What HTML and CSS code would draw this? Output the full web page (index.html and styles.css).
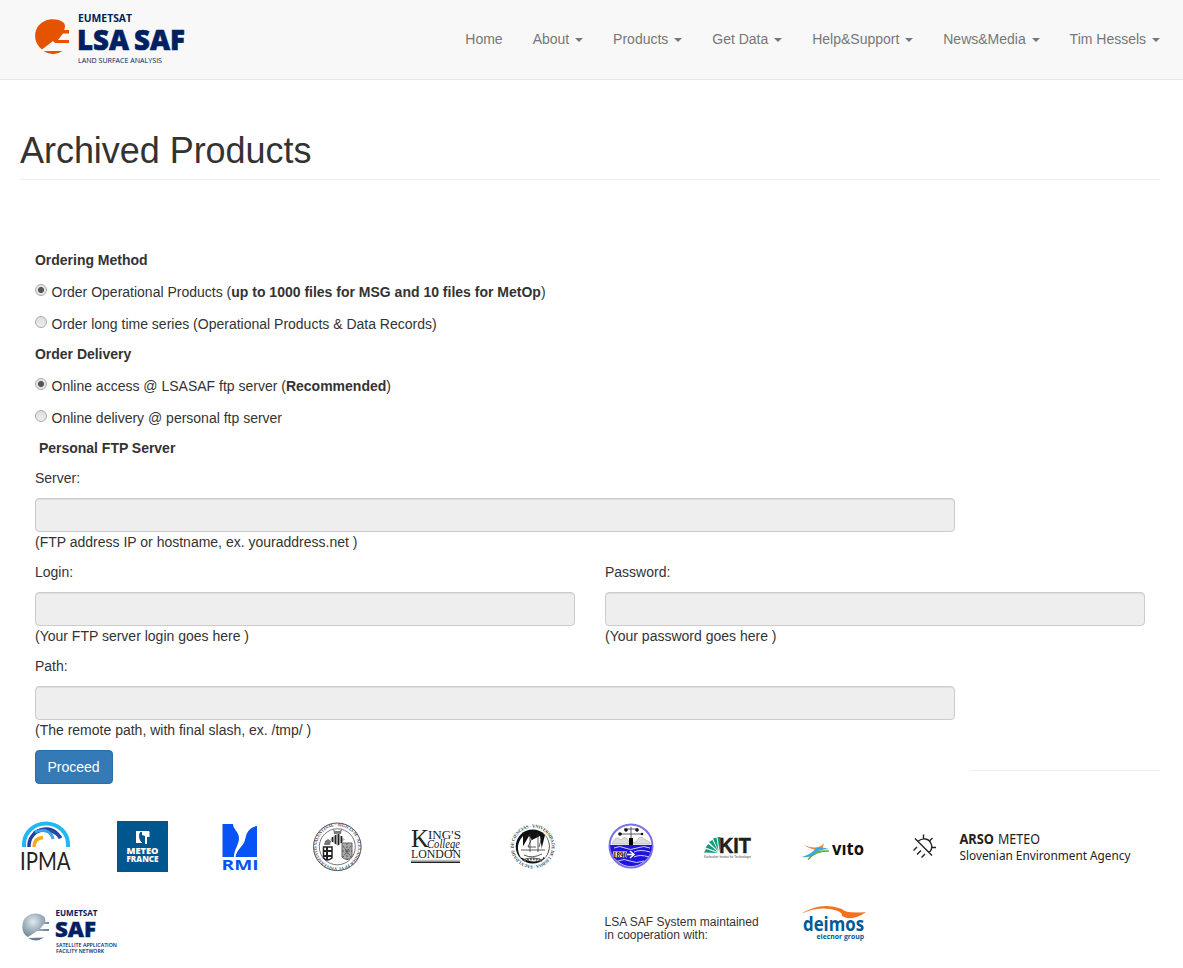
FILE: index.html
```html
<!DOCTYPE html>
<html lang="en">
<head>
<meta charset="utf-8">
<title>LSA SAF - Archived Products</title>
<link rel="stylesheet" href="styles.css">
</head>
<body>
<header class="navbar">
  <a class="brand">
    <svg width="160" height="60" viewBox="30 8 160 60">
      <path fill="#e65300" d="M62 21.500C54 17 43 19 37.500 27C33 35 35 44 42 49.500L53 41L55 43H69V40H58L63 33.500H69V30H64C66 27 65 23 62 21.500ZM43.500 51Q53 57.500 62.500 51Z"/>
      <g class="logo-face" fill="#00205f">
        <text x="78" y="22.200" font-size="11" font-weight="700" textLength="54" lengthAdjust="spacingAndGlyphs">EUMETSAT</text>
        <g stroke="#00205f" stroke-width=".6">
          <text x="77" y="50.300" font-size="28.500" font-weight="800" textLength="52" lengthAdjust="spacingAndGlyphs">LSA</text>
          <text x="134" y="50.300" font-size="28.500" font-weight="800" textLength="51" lengthAdjust="spacingAndGlyphs">SAF</text>
        </g>
        <text x="78" y="63.200" font-size="8" textLength="84" lengthAdjust="spacingAndGlyphs">LAND SURFACE ANALYSIS</text>
      </g>
    </svg>
  </a>
  <nav class="menu">
    <a>Home</a>
    <a>About <i class="caret"></i></a>
    <a>Products <i class="caret"></i></a>
    <a>Get Data <i class="caret"></i></a>
    <a>Help&amp;Support <i class="caret"></i></a>
    <a>News&amp;Media <i class="caret"></i></a>
    <a>Tim Hessels <i class="caret"></i></a>
  </nav>
</header>
<main class="page">
  <h1 class="title">Archived Products</h1>
  <div class="content">
    <form class="order">
      <div class="group">
        <b>Ordering Method</b>
        <label class="option"><span class="radio on"></span><span>Order Operational Products (<b>up to 1000 files for MSG and 10 files for MetOp</b>)</span></label>
        <label class="option"><span class="radio"></span><span>Order long time series (Operational Products &amp; Data Records)</span></label>
      </div>
      <div class="group">
        <b>Order Delivery</b>
        <label class="option"><span class="radio on"></span><span>Online access @ LSASAF ftp server (<b>Recommended</b>)</span></label>
        <label class="option"><span class="radio"></span><span>Online delivery @ personal ftp server</span></label>
      </div>
      <b class="indent">Personal FTP Server</b>
      <div class="field"><label>Server:</label><input class="control" disabled><span>(FTP address IP or hostname, ex. youraddress.net )</span></div>
      <div class="pair">
        <div class="field"><label>Login:</label><input class="control" disabled><span>(Your FTP server login goes here )</span></div>
        <div class="field"><label>Password:</label><input class="control" disabled><span>(Your password goes here )</span></div>
      </div>
      <div class="field"><label>Path:</label><input class="control" disabled><span>(The remote path, with final slash, ex. /tmp/ )</span></div>
      <button class="proceed" type="button">Proceed</button>
    </form>
    <hr class="rule">
  </div>
</main>
<footer class="partners">
  <div class="logos">
    <svg viewBox="20 810 95 70">
      <g fill="none">
        <path d="M24 847V844A22 20.500 0 0 1 68 844V847" stroke="#20b8ef" stroke-width="4"/>
        <path d="M29 847C28 829 53 822 60 838" stroke="#203f99" stroke-width="3.500"/>
        <path d="M34 833C46 825 58 834 61 838" stroke="#244aa5" stroke-width="3"/>
        <path d="M35 832C46 828 52 833 53 839" stroke="#38a3e5" stroke-width="3"/>
        <path d="M34 847Q34 838 43 837.500" stroke="#f9a91c" stroke-width="3.500"/>
      </g>
      <text class="thin" x="20" y="870" font-size="25" fill="#222" textLength="50.500" lengthAdjust="spacingAndGlyphs">IPMA</text>
    </svg>
    <svg viewBox="115 810 95 70">
      <path fill="#00578f" d="M117 821h51v51h-51z"/>
      <path fill="#fff" d="M136 831h5q-4 5 0 11v1h-5zM142 831h7v6h-2v7h-2v-8l-3-1z"/>
      <path d="M136 831.500H149V837M136 842.500H142" stroke="#fff" fill="none"/>
      <g class="logo-face" fill="#fff" font-size="8.200" font-weight="800">
        <text x="126.500" y="853.500" textLength="32" lengthAdjust="spacingAndGlyphs">METEO</text>
        <text x="126.500" y="862" textLength="32" lengthAdjust="spacingAndGlyphs">FRANCE</text>
      </g>
    </svg>
    <svg viewBox="210 810 95 70">
      <path fill="#0753f5" d="M222.500 824H233C233 829 239 832 239 838C239 845 234 849 234 857H222.500ZM257 826V857H235.500C237 848 244 847 245.500 838C247 830 252 827 257 826Z"/>
      <text class="logo-face" x="221.500" y="869.500" fill="#0753f5" font-size="14" font-weight="700" textLength="37" lengthAdjust="spacingAndGlyphs">RMI</text>
    </svg>
    <svg viewBox="305 810 95 70">
      <g fill="none" stroke="#555"><circle cx="337.300" cy="846.800" r="23.800"/><circle cx="337.300" cy="846.800" r="18" stroke-width=".8"/></g>
      <path id="uvRing" fill="none" d="M337.300 867.500A20.700 20.700 0 1 1 337.400 867.500"/>
      <text class="serif" font-size="4.500" font-weight="700" fill="#555"><textPath href="#uvRing" textLength="128">VNIVERSITATIS VALENTINAE · SIGILLVM · ALEXANDER PP VI</textPath></text>
      <path d="M333 828L335 831H340L342 828L341 834H334Z" fill="#777"/>
      <path d="M337.500 833L345 839.500L337.500 846L330 839.500Z" fill="#bbb"/>
      <path d="M332.500 837V842M335.500 835V844M338.500 834V845M341.500 836V843" stroke="#222" stroke-width="1.500"/>
      <path d="M323.500 847H332V858Q327 862 323.500 858Z" fill="#fff" stroke="#222" stroke-width="1.500"/>
      <path d="M323 851H332M323 856H332M327 847V860" stroke="#222" stroke-width="2"/>
      <path d="M324 845L325 841L328 839L331 841L330 845Z" fill="#777"/>
      <path d="M342 843H352V857Q347 862 342 857Z" fill="#aaa" stroke="#666"/>
      <path d="M343 846L351 857M351 846L343 857M347 843V860M342 851H352" stroke="#555" stroke-dasharray="2 1"/>
    </svg>
    <svg viewBox="400 810 95 70">
      <g class="serif" fill="#222">
        <text x="411" y="847" font-size="26" textLength="18" lengthAdjust="spacingAndGlyphs">K</text>
        <text x="428" y="839" font-size="13.500" textLength="33" lengthAdjust="spacingAndGlyphs">ING'S</text>
        <text x="427" y="847.500" font-size="11.500" font-style="italic" textLength="33" lengthAdjust="spacingAndGlyphs">College</text>
        <text x="411" y="858" font-size="12.500" textLength="50" lengthAdjust="spacingAndGlyphs">LONDON</text>
      </g>
      <path d="M411 860.300H460" stroke="#aaa"/><path d="M411 862.300H460" stroke="#222" stroke-width="1.500"/>
    </svg>
    <svg viewBox="495 810 95 70">
      <path id="lisRing" fill="none" d="M532.700 865.500A19 19 0 1 1 532.800 865.500"/>
      <text class="serif" font-size="4.500" font-weight="700" fill="#444"><textPath href="#lisRing" textLength="118">FACVLDADE DE CIENCIAS · VNIVERSIDADE DE LISBOA ·</textPath></text>
      <circle cx="532.700" cy="846.500" r="17" fill="#111"/>
      <path d="M523 836Q514 846 521 858L527 855L523 847ZM545 835Q553 846 545 858L540 855Z" fill="#fff"/>
      <path d="M522 848L529 836L532 840L540 836L542 850H547L542 860Q531 864 521 857Z" fill="#fff"/>
      <path d="M530 834V852M538 834V852M521 850H545M524 855Q532 859 542 854M532 838L528 847H536M541 840L539 847M522 860Q532 856 543 860" stroke="#333" stroke-width=".8" fill="none"/>
      <path d="M524 861Q533 857 542 861" stroke="#666" stroke-width="2.500" stroke-dasharray="2 1" fill="none"/>
    </svg>
    <svg viewBox="590 810 95 70">
      <circle cx="631" cy="846" r="21.500" fill="#fff" stroke="#7770ed" stroke-width="2"/>
      <path d="M610 845H652A21 21 0 0 1 610 845Z" fill="#2014d8"/>
      <path d="M613 842Q616 835 621 840Q625 834 629 842H636Q640 834 644 839L650 842V844H612Z" fill="#ddd" stroke="#aaa" stroke-width=".6"/>
      <path d="M631 827V845M619 834H643M624 829H638" stroke="#333" stroke-width=".8"/>
      <path d="M629 838H633V845H629Z"/>
      <g fill="#111"><circle cx="620" cy="834" r="1.800"/><circle cx="642" cy="834" r="1.300"/><circle cx="626" cy="830" r="1.800"/><circle cx="637" cy="830" r="1.800"/></g>
      <g fill="none" stroke="#cfd0ff" stroke-width="1"><path d="M614 848Q620 845 625 848T637 848T650 848M634 852Q640 849 650 852M634 857Q640 854 649 857M618 861Q624 858 630 861T644 861"/></g>
      <path d="M613 851.500H627V857.500H614Z" fill="#fff"/>
      <text class="serif" x="613" y="857.500" font-size="8" font-weight="700" textLength="14" lengthAdjust="spacingAndGlyphs">1890</text>
      <path d="M627 854.500H633M630 851L634 854.500L630 858" stroke="#fff" stroke-width="1.500" fill="none"/>
    </svg>
    <svg viewBox="685 810 95 70">
      <path fill="#159b7a" d="M718 853L704 852.500L706 849ZM718 852L705.500 847.500L708.500 844ZM718 851L709 842L712.500 840ZM718.500 851L713 838.500L716.500 837.500ZM719.500 852L717.500 837H720.500Z"/>
      <text class="sans" fill="#202020" font-weight="700" font-size="22.500" x="719" y="853" textLength="32" lengthAdjust="spacingAndGlyphs" stroke="#202020" stroke-width=".5">KIT</text>
      <text class="sans" x="704" y="858" font-size="3.600" textLength="47" lengthAdjust="spacingAndGlyphs" fill="#444">Karlsruher Institut für Technologie</text>
    </svg>
    <svg viewBox="780 810 95 70">
      <path fill="#f08a32" d="M804 845Q818 851 824 843L822 850Q812 851 804 845Z"/>
      <path fill="#65ad38" d="M808 860Q812 849 829 851Q815 851 808 860Z" stroke="#65ad38"/>
      <path fill="#3fa5df" d="M802 857Q812 854 816 848Q820 846 829 849Q817 849 813 855Q808 858 802 857Z"/>
      <text class="logo-face" x="832" y="855" font-size="17.500" font-weight="700" fill="#111" textLength="32" lengthAdjust="spacingAndGlyphs">vıto</text>
    </svg>
    <svg class="wide" viewBox="875 810 285 70">
      <g fill="none" stroke="#222" stroke-width="1.400"><path d="M915 838.500L932 855.500M918 841.500C922 837.500 929 838 931 843.500C933 847 931 851 929 852.500M923.500 834.500V839M932.500 838L929.500 841M936 847.500H932M917 847L913.500 850.500M921 850.500L917 854.500M925 854L921.500 857.500"/></g>
      <g class="noto" fill="#222">
        <text x="959.500" y="844" font-size="13.500" font-weight="700" textLength="34.500" lengthAdjust="spacingAndGlyphs">ARSO</text>
        <text x="998" y="844" font-size="13.500" textLength="42" lengthAdjust="spacingAndGlyphs">METEO</text>
        <text x="959.500" y="859.500" font-size="12.500" textLength="171" lengthAdjust="spacingAndGlyphs">Slovenian Environment Agency</text>
      </g>
    </svg>
  </div>
  <div class="support">
    <svg class="saf" viewBox="20 895 110 70">
      <defs><radialGradient id="steel" cx=".4" cy=".3" r=".8"><stop stop-color="#e0e8ed"/><stop offset="1" stop-color="#47677d"/></radialGradient></defs>
      <path fill="url(#steel)" d="M43 916C36 911 26 914 23 922C21 930 24 935 28 937L37 931H49V929H40L44 924H49V922H45C46 920 45 917 43 916ZM28 938Q36 943 44 937.500Z"/>
      <g class="logo-face" fill="#00205f">
        <text x="55.500" y="916" font-size="8.200" font-weight="700" textLength="42" lengthAdjust="spacingAndGlyphs">EUMETSAT</text>
        <text x="55" y="937" font-size="21.500" font-weight="800" textLength="41" lengthAdjust="spacingAndGlyphs" stroke="#00205f" stroke-width=".4">SAF</text>
        <text x="56" y="947.300" font-size="5.800" font-weight="600" textLength="61" lengthAdjust="spacingAndGlyphs">SATELLITE APPLICATION</text>
        <text x="56" y="953" font-size="5.800" font-weight="600" textLength="48" lengthAdjust="spacingAndGlyphs">FACILITY NETWORK</text>
      </g>
    </svg>
    <p class="note">LSA SAF System maintained<br>in cooperation with:</p>
    <svg class="deimos" viewBox="780 895 95 70">
      <path fill="#f5711d" d="M801 914Q821 901 842 909Q846 914 866 912Q852 922 842 916Q843 911 830 909Q816 907 801 914Z"/>
      <g class="logo-face" fill="#005a93"><text x="803" y="931" font-size="19.500" font-weight="700" textLength="61" lengthAdjust="spacingAndGlyphs">deimos</text><text x="816.500" y="938.500" font-size="7.800" font-weight="700" textLength="47.500" lengthAdjust="spacingAndGlyphs">elecnor group</text></g>
    </svg>
  </div>
</footer>
</body>
</html>
```
FILE: styles.css
```css
* { box-sizing: border-box; }
body { margin: 0; background: #fff; color: #333; font: 14px/20px "Liberation Sans", Arial, sans-serif; overflow: hidden; }
svg { display: block; }
.navbar { display: flex; justify-content: space-between; height: 80px; padding: 8px 23px 0 30px; background: #f8f8f8; border-bottom: 1px solid #e7e7e7; }
.menu { display: flex; gap: 30px; padding-top: 21px; color: #777; }
.menu a { white-space: nowrap; }
.caret { display: inline-block; margin-left: 2px; vertical-align: middle; border-top: 4px solid #777; border-left: 4px solid transparent; border-right: 4px solid transparent; }
.page { padding: 50px 23px 0 20px; }
.title { height: 50px; margin: 0; padding-top: 1px; border-bottom: 1px solid #eee; font-size: 36px; font-weight: 500; line-height: 40px; letter-spacing: -.04px; }
.content { display: flex; align-items: flex-end; height: 604px; padding-top: 70px; }
.order { display: flex; flex-direction: column; gap: 10px; width: 950px; padding: 0 15px; flex: none; }
.group { display: flex; flex-direction: column; gap: 12px; }
.group > b, .indent { letter-spacing: -.02px; }
.option { display: flex; gap: 4px; height: 20px; white-space: nowrap; }
.radio { width: 12px; height: 12px; margin: 2px .5px 0 0; border: 1px solid #aaa; border-radius: 50%; background: linear-gradient(#ddd, #eee); }
.radio.on { background: radial-gradient(circle, #555 0 2.7px, #e5e5e5 3.3px); }
.indent { padding-left: 4px; }
.field { display: flex; flex-direction: column; }
.field label { margin-bottom: 10px; }
.control { display: block; width: 100%; height: 34px; border: 1px solid #ccc; border-radius: 4px; background: #eee; box-shadow: inset 0 1px 1px rgba(0,0,0,.075); }
.pair { display: grid; grid-template-columns: 540px 540px; gap: 30px; }
.proceed { width: 78px; height: 34px; padding: 0 1px 0 0; color: #fff; background: #337ab7; border: 1px solid #2e6da4; border-radius: 4px; font: inherit; }
.rule { width: 190px; margin: 0 0 13px; border: 0; border-top: 1px solid #eee; }
.partners { padding: 26px 23px 0 20px; }
.logos { display: grid; grid-template-columns: repeat(9, 95px) 285px; height: 70px; }
.logos svg { width: 95px; height: 70px; }
.logos .wide { width: 285px; }
.support { display: grid; grid-template-columns: 584.5px 175.5px 95px; margin-top: 15px; }
.saf { width: 110px; height: 70px; }
.note { margin: 21px 0 0; font-size: 12px; line-height: 13px; white-space: nowrap; }
.deimos { width: 95px; height: 70px; }
.logo-face { font-family: "Open Sans", sans-serif; }
.noto { font-family: "Noto Sans", sans-serif; }
.sans { font-family: "Liberation Sans", sans-serif; }
.serif { font-family: "Liberation Serif", serif; }
.thin { font-family: Lato, sans-serif; font-weight: 400; }
```
